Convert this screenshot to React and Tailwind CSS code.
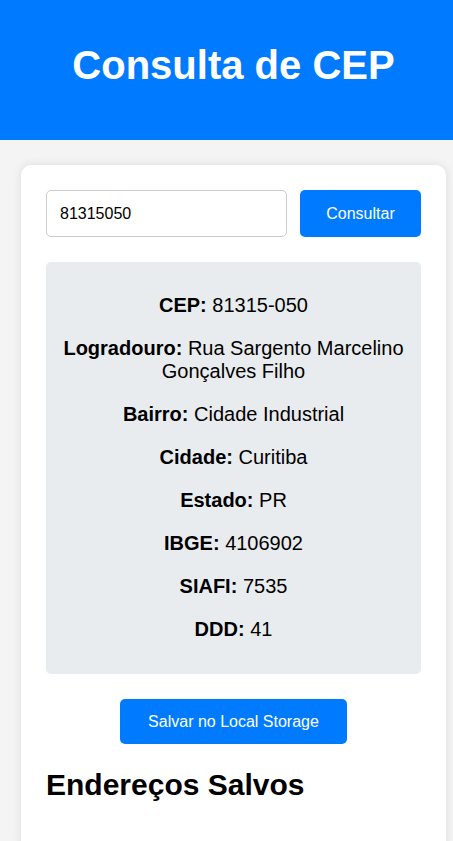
import { useState } from 'react';

const result = [
  ['CEP', '81315-050'],
  ['Logradouro', 'Rua Sargento Marcelino Gonçalves Filho'],
  ['Bairro', 'Cidade Industrial'],
  ['Cidade', 'Curitiba'],
  ['Estado', 'PR'],
  ['IBGE', '4106902'],
  ['SIAFI', '7535'],
  ['DDD', '41'],
];

export default function App() {
  const [cep, setCep] = useState('81315050');

  return (
    <div className="min-h-screen bg-[#f4f4f4] font-['Liberation_Sans',Arial,sans-serif] text-black pb-10">
      <header className="h-[140px] bg-[#007bff] pt-[42px] pl-[14px] text-center">
        <h1 className="text-[40px] leading-[46px] font-bold text-white">Consulta de CEP</h1>
      </header>

      <div className="ml-[21px] mt-[25px] w-[425px] rounded-[10px] bg-white px-[25px] pt-[25px] pb-[50px] shadow-[0_0_10px_rgba(0,0,0,0.1)]">
        {/* Search */}
        <div className="flex gap-[13px]">
          <input
            value={cep}
            onChange={e => setCep(e.target.value)}
            className="h-[47px] w-[241px] rounded-[5px] border border-[#ccc] px-[13px] text-base text-black outline-none"
          />
          <button className="h-[47px] w-[121px] rounded-[5px] bg-[#007bff] text-base text-white">Consultar</button>
        </div>

        {/* Result */}
        <div className="mt-[25px] rounded-[5px] bg-[#e9ecef] px-3 pt-[12px] pb-[13px] text-center text-[20px] leading-[23px]">
          {result.map(([label, value]) => (
            <p key={label} className="my-5">
              <strong className="font-bold">{label}:</strong> {value}
            </p>
          ))}
        </div>

        <div className="mt-[25px] flex justify-center">
          <button className="h-[45px] w-[227px] rounded-[5px] bg-[#007bff] text-base text-white">Salvar no Local Storage</button>
        </div>

        <h2 className="mt-[24px] text-[30px] leading-[34px] font-bold">Endereços Salvos</h2>
      </div>
    </div>
  );
}
